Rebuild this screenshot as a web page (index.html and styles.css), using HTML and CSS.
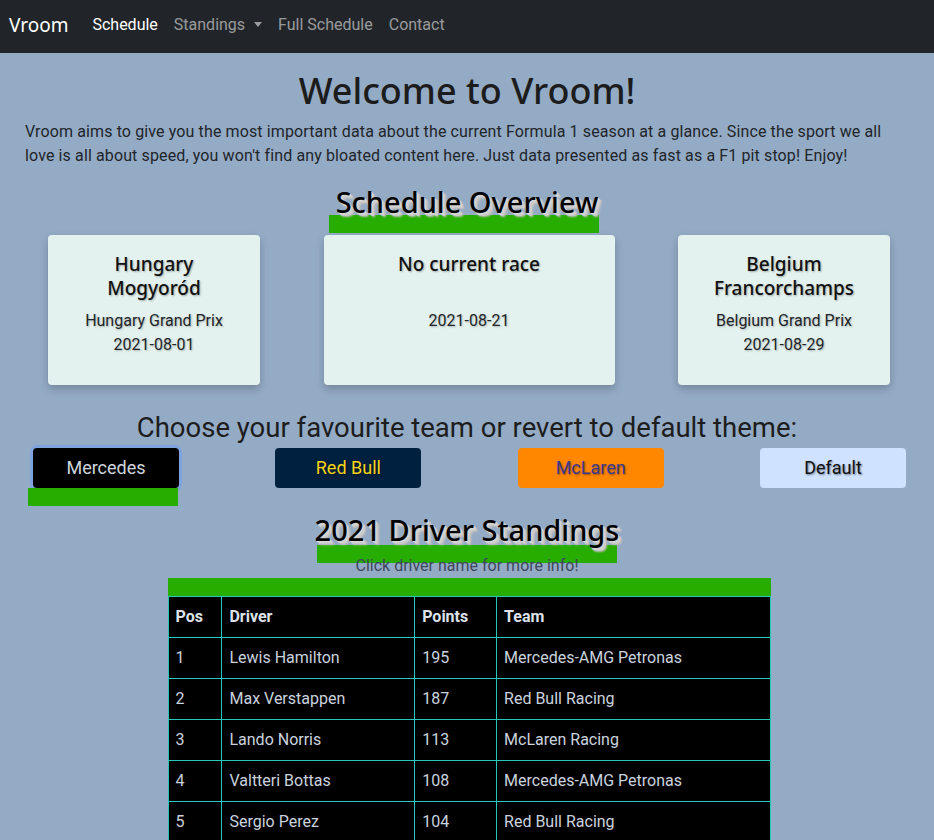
FILE: index.html
```html
<!DOCTYPE html>
<html lang="en">
<head>
<meta charset="utf-8">
<title>Vroom</title>
<link rel="stylesheet" href="styles.css">
</head>
<body>
<nav class="navbar">
  <a class="brand" href="#">Vroom</a>
  <ul class="nav-links">
    <li><a class="nav-link active" href="#">Schedule</a></li>
    <li><a class="nav-link dropdown" href="#">Standings <span class="caret"></span></a></li>
    <li><a class="nav-link" href="#">Full Schedule</a></li>
    <li><a class="nav-link" href="#">Contact</a></li>
  </ul>
</nav>

<main class="main">
  <h1 class="title">Welcome to Vroom!</h1>
  <p class="intro">Vroom aims to give you the most important data about the current Formula 1 season at a glance. Since the sport we all love is all about speed, you won't find any bloated content here. Just data presented as fast as a F1 pit stop! Enjoy!</p>

  <div class="heading-wrap">
    <h2 class="section-heading overview">Schedule Overview</h2>
  </div>

  <div class="cards">
    <div class="card card-side">
      <h3 class="card-title">Hungary<br>Mogyoród</h3>
      <p class="card-text">Hungary Grand Prix</p>
      <p class="card-text">2021-08-01</p>
    </div>
    <div class="card card-mid">
      <h3 class="card-title">No current race<br>&nbsp;</h3>
      <p class="card-text">2021-08-21</p>
    </div>
    <div class="card card-side">
      <h3 class="card-title">Belgium<br>Francorchamps</h3>
      <p class="card-text">Belgium Grand Prix</p>
      <p class="card-text">2021-08-29</p>
    </div>
  </div>

  <h3 class="choose">Choose your favourite team or revert to default theme:</h3>

  <div class="teams">
    <button class="team-btn mercedes">Mercedes</button>
    <button class="team-btn redbull">Red Bull</button>
    <button class="team-btn mclaren">McLaren</button>
    <button class="team-btn default">Default</button>
  </div>

  <div class="heading-wrap standings-wrap">
    <h2 class="section-heading standings">2021 Driver Standings</h2>
  </div>
  <p class="hint">Click driver name for more info!</p>

  <div class="table-wrap">
    <div class="table-bar"></div>
    <table class="standings-table">
      <thead>
        <tr><th class="c-pos">Pos</th><th class="c-driver">Driver</th><th class="c-points">Points</th><th class="c-team">Team</th></tr>
      </thead>
      <tbody>
        <tr><td>1</td><td>Lewis Hamilton</td><td>195</td><td>Mercedes-AMG Petronas</td></tr>
        <tr><td>2</td><td>Max Verstappen</td><td>187</td><td>Red Bull Racing</td></tr>
        <tr><td>3</td><td>Lando Norris</td><td>113</td><td>McLaren Racing</td></tr>
        <tr><td>4</td><td>Valtteri Bottas</td><td>108</td><td>Mercedes-AMG Petronas</td></tr>
        <tr><td>5</td><td>Sergio Perez</td><td>104</td><td>Red Bull Racing</td></tr>
      </tbody>
    </table>
  </div>
</main>
</body>
</html>
```

FILE: styles.css
```css
* { box-sizing: border-box; }

html, body {
  margin: 0;
  padding: 0;
}

body {
  background: #94abc6;
  font-family: "Roboto", "Liberation Sans", sans-serif;
  font-size: 16px;
  line-height: 1.5;
  color: #212529;
}

a { text-decoration: none; }

/* Navbar */
.navbar {
  height: 53px;
  background: #212529;
  display: flex;
  align-items: center;
  padding: 0 9px 4px;
}

.brand {
  color: #fff;
  font-family: "Noto Sans", "Open Sans", sans-serif;
  font-size: 19px;
  margin-right: 16px;
  line-height: 30px;
}

.nav-links {
  list-style: none;
  margin: 0;
  padding: 0;
  display: flex;
}

.nav-link {
  display: inline-flex;
  align-items: center;
  padding: 8px 8px;
  color: rgba(255, 255, 255, 0.55);
  font-size: 16px;
}

.nav-link.active { color: #fff; }

.caret {
  display: inline-block;
  margin-left: 9px;
  width: 0;
  height: 0;
  border-left: 4.5px solid transparent;
  border-right: 4.5px solid transparent;
  border-top: 5px solid rgba(255, 255, 255, 0.55);
}

/* Main */
.main {
  padding: 14px 25px 0;
}

.title {
  margin: 0 0 5px;
  text-align: center;
  font-family: "Noto Sans", "Open Sans", sans-serif;
  font-weight: 500;
  font-size: 36px;
  line-height: 48px;
  color: #1c1c1c;
}

.intro {
  max-width: 870px;
  margin: 0 0 16px;
  font-size: 16px;
  line-height: 24px;
  letter-spacing: 0.12px;
}

.heading-wrap {
  text-align: center;
}

.section-heading {
  position: relative;
  display: inline-block;
  margin: 0;
  font-family: "Noto Sans", "Open Sans", sans-serif;
  font-weight: 500;
  font-size: 29px;
  line-height: 36px;
  color: #000;
  text-shadow: 1px 1px 0 #d9d9d9, 2px 2px 0 #d0d0d0, 3px 3px 0 #c8c8c8, 4px 4px 2px #bdbdbd;
  z-index: 0;
}

.section-heading::after {
  content: "";
  position: absolute;
  height: 18px;
  background: #27ad00;
  z-index: -1;
}

.overview::after {
  left: -7px;
  right: -1px;
  top: 31px;
}

.standings-wrap {
  margin-top: 24px;
}

.standings::after {
  left: 2px;
  right: 2px;
  top: 33px;
}

/* Cards */
.cards {
  display: flex;
  justify-content: space-between;
  padding: 15px 19px 0 23px;
}

.card {
  height: 150px;
  background: #e4f2ef;
  border-radius: 4px;
  box-shadow: 0 4px 8px rgba(0, 0, 0, 0.22);
  text-align: center;
  padding: 17px 12px 16px;
}

.card-side { width: 212px; }
.card-mid { width: 291px; }

.card-title {
  margin: 0 0 9px;
  font-family: "Noto Sans", "Open Sans", sans-serif;
  font-weight: 500;
  font-size: 19px;
  line-height: 24px;
  color: #111;
  text-shadow: 1px 1px 2px rgba(0, 0, 0, 0.3);
}

.card-text {
  margin: 0;
  font-size: 16px;
  line-height: 24px;
  text-shadow: 1px 1px 2px rgba(0, 0, 0, 0.25);
}

/* Team chooser */
.choose {
  margin: 26px 0 3px;
  text-align: center;
  font-weight: 400;
  font-size: 27.5px;
  line-height: 34px;
  color: #1d1d1d;
}

.teams {
  display: flex;
  justify-content: space-between;
  padding: 0 3px 0 8px;
}

.team-btn {
  position: relative;
  width: 146px;
  height: 40px;
  border: none;
  border-radius: 4px;
  font-family: "Roboto", "Liberation Sans", sans-serif;
  font-size: 18px;
  line-height: 28px;
  text-shadow: 1px 1px 2px rgba(0, 0, 0, 0.45);
  cursor: pointer;
}

.mercedes {
  background: #000;
  color: #cfd6de;
  box-shadow: 0 0 0 3px #7ea3de;
}

.mercedes::after {
  content: "";
  position: absolute;
  left: -5px;
  top: 40px;
  width: 150px;
  height: 18px;
  background: #27ad00;
}

.redbull { background: #00203f; color: #f6d51b; }
.mclaren { background: #ff8700; color: #3d3a8e; }
.default { background: #cfe2ff; color: #111; }

/* Standings */
.hint {
  margin: 6px 0 0;
  text-align: center;
  font-size: 16px;
  line-height: 24px;
  color: #3d4859;
  position: relative;
}

.table-wrap {
  width: 603px;
  margin: 0 auto;
  position: relative;
  left: 2px;
}

.table-bar {
  height: 18px;
  background: #27ad00;
}

.standings-table {
  width: 603px;
  border-collapse: collapse;
  background: #000;
  color: #cad3df;
  font-size: 16px;
  line-height: 24px;
}

.standings-table th,
.standings-table td {
  border: 1px solid #22cbb9;
  padding: 8px 8px 8px 7px;
  text-align: left;
  vertical-align: top;
}

.standings-table th {
  font-weight: 700;
  color: #dde2ea;
}

.c-pos { width: 54px; }
.c-driver { width: 193px; }
.c-points { width: 82px; }
.c-team { width: 274px; }
```
